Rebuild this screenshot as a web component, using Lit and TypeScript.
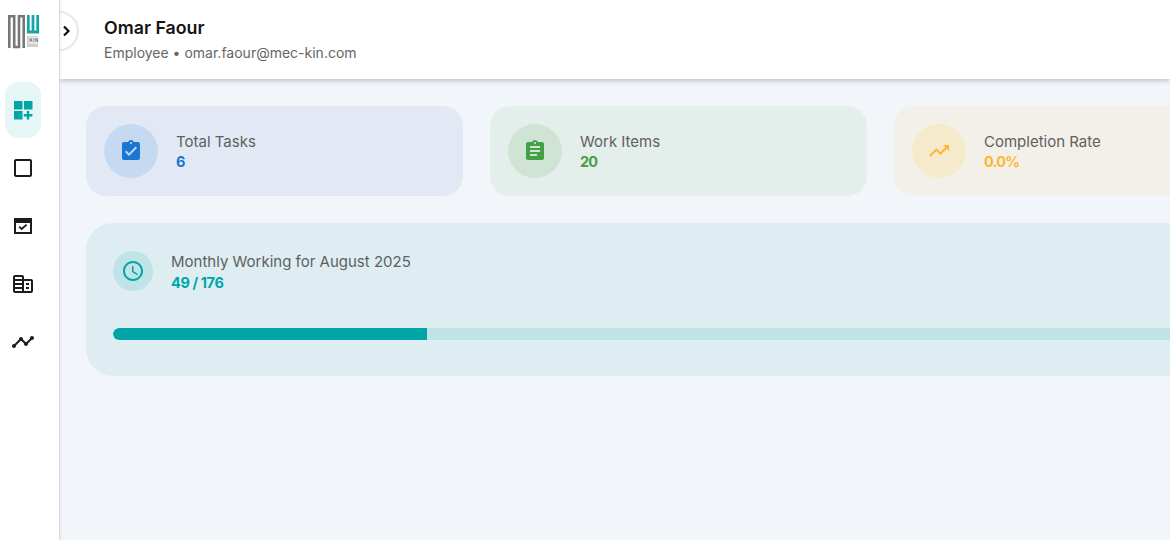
import { LitElement, html, css, svg } from "lit";
import { customElement } from "lit/decorators.js";

const P = {
  dash: "M3 3h8.500v8.500H3zm10 0h8.500v8.500H13zM3 13h8.500v8.500H3zm15.200 0h-2.400v3.100h-3v2.400h3v3h2.400v-3h3.200v-2.400h-3.200z",
  square: "M19 3H5c-1.100 0-2 .9-2 2v14c0 1.100.9 2 2 2h14c1.100 0 2-.9 2-2V5c0-1.100-.9-2-2-2zm0 16H5V5h14v14z",
  cal: "M3 4h18v16H3zM5 9v9h14V9zM7.500 13.300 8.800 12 10.700 13.800 15 10l1.200 1.300-5.500 5z",
  bldg: "M11 3H4C2.900 3 2 3.900 2 5v14c0 1.100.9 2 2 2h16c1.100 0 2-.9 2-2V9c0-1.100-.9-2-2-2h-7V5c0-1.100-.9-2-2-2zM4 5h7v2H4V5zm0 4h7v2H4V9zm0 4h7v2H4v-2zm0 4h7v2H4v-2zm9-8h7v10h-7V9zm2 2v2h3v-2h-3zm0 4v2h3v-2h-3z",
  timeline: "M23 8c0 1.100-.9 2-2 2-.18 0-.35-.02-.51-.07l-3.560 3.550c.05.16.07.34.07.52 0 1.100-.9 2-2 2s-2-.9-2-2c0-.18.02-.36.07-.52l-2.550-2.550c-.16.05-.34.07-.52.07s-.36-.02-.52-.07l-4.550 4.560c.05.16.07.33.07.51 0 1.100-.9 2-2 2s-2-.9-2-2 .9-2 2-2c.18 0 .35.02.51.07l4.560-4.550C8.020 9.360 8 9.180 8 9c0-1.100.9-2 2-2s2 .9 2 2c0 .18-.02.36-.07.52l2.550 2.550c.16-.05.34-.07.52-.07s.36.02.52.07l3.550-3.560C19.020 8.350 19 8.180 19 8c0-1.100.9-2 2-2s2 .9 2 2z",
  turnedIn: "M19 3h-4.180C14.400 1.840 13.300 1 12 1c-1.300 0-2.400.84-2.820 2H5c-1.100 0-2 .9-2 2v14c0 1.100.9 2 2 2h14c1.100 0 2-.9 2-2V5c0-1.100-.9-2-2-2zm-7 0c.55 0 1 .45 1 1s-.45 1-1 1-1-.45-1-1 .45-1 1-1zm-2 14l-4-4 1.410-1.410L10 14.170l6.590-6.590L18 9l-8 8z",
  assign: "M19 3h-4.180C14.400 1.840 13.300 1 12 1c-1.300 0-2.400.84-2.820 2H5c-1.100 0-2 .9-2 2v14c0 1.100.9 2 2 2h14c1.100 0 2-.9 2-2V5c0-1.100-.9-2-2-2zm-7 0c.55 0 1 .45 1 1s-.45 1-1 1-1-.45-1-1 .45-1 1-1zm2 14H7v-2h7v2zm3-4H7v-2h10v2zm0-4H7V7h10v2z",
  trend: "M16 6l2.290 2.290-4.880 4.880-4-4L2 16.590 3.410 18l6-6 4 4 6.300-6.290L22 12V6z",
  clock: "M11.990 2C6.470 2 2 6.480 2 12s4.470 10 9.990 10C17.520 22 22 17.520 22 12S17.520 2 11.990 2zM12 20c-4.420 0-8-3.580-8-8s3.580-8 8-8 8 3.580 8 8-3.580 8-8 8zm.5-13H11v6l5.250 3.150.75-1.230-4.500-2.670z",
};

const icon = (d: string) => html`<svg class="ic" viewBox="0 0 24 24"><path d=${d} fill-rule="evenodd"></path></svg>`;

@customElement("app-root")
export class AppRoot extends LitElement {
  static styles = css`
    :host { display: block; width: 1170px; height: 540px; overflow: hidden; font-family: Inter, "Liberation Sans", sans-serif; background: #f2f5fa; }
    .root { display: flex; height: 540px; position: relative; }
    .side { flex: 0 0 54px; padding-left: 5px; background: #fff; border-right: 1px solid #d8dbe6; box-shadow: 1px 0 2px rgba(0,0,0,.06); display: flex; flex-direction: column; align-items: flex-start; position: relative; z-index: 3; box-sizing: content-box; }
    .logo { width: 32px; height: 34px; margin: 15px 0 33px 3px; display: block; }
    .nav { width: 36px; height: 56px; border-radius: 14px; display: flex; align-items: center; justify-content: center; margin-bottom: 2px; color: #1c1c1c; }
    .nav.active { background: #e6f6f6; color: #00a6a6; }
    .ic { width: 24px; height: 24px; fill: currentColor; display: block; }
    .toggle { position: absolute; left: 39px; top: 11px; width: 36px; height: 36px; border-radius: 50%; background: #fff; border: 2px solid #e8e8e8; display: flex; align-items: center; justify-content: flex-end; z-index: 2; box-sizing: content-box; }
    .toggle svg { width: 14px; height: 14px; margin-right: 3px; fill: none; stroke: #111; stroke-width: 2.2; }
    .main { flex: 1; min-width: 0; display: flex; flex-direction: column; }
    .head { height: 79px; flex: none; background: #fff; box-shadow: 0 2px 5px rgba(0,0,0,.2); padding: 17px 0 0 44px; box-sizing: border-box; position: relative; z-index: 1; }
    .name { font-size: 17.8px; line-height: 22px; font-weight: 600; color: #141414; }
    .sub { font-size: 14px; line-height: 20px; color: #666; margin-top: 4px; }
    .content { padding: 27px 26px; width: 1185px; box-sizing: content-box; }
    .cards { display: grid; grid-template-columns: repeat(3, 377px); gap: 27px; }
    .card { height: 90px; border-radius: 20px; display: flex; align-items: center; padding: 0 18px; gap: 18px; box-sizing: border-box; }
    .circle { width: 54px; height: 54px; border-radius: 50%; display: flex; align-items: center; justify-content: center; flex: none; }
    .text { padding-top: 2px; }
    .mrow .text { padding-top: 4px; }
    .label { font-size: 15px; line-height: 20px; color: #5f5f5f; }
    .val { font-size: 14.5px; line-height: 20px; font-weight: 700; letter-spacing: -.8px; }
    .blue { background: #e2e9f4; } .blue .circle { background: #c5daf0; } .blue .circle, .blue .val { color: #1976d2; }
    .green { background: #e4eeea; } .green .circle { background: #cfe4d5; } .green .circle, .green .val { color: #43a047; }
    .amber { background: #f3f0e9; } .amber .circle { background: #f6eacc; } .amber .circle, .amber .val { color: #fdb62f; }
    .month { margin: 27px 2px 0 0; height: 153px; border-radius: 27px; background: #deedf2; padding: 27px; box-sizing: border-box; }
    .mrow { display: flex; align-items: center; gap: 18px; height: 41px; }
    .mcircle { width: 40px; height: 40px; border-radius: 50%; background: #bfe3e6; color: #00a6a6; display: flex; align-items: center; justify-content: center; flex: none; }
    .mval { font-size: 14.5px; line-height: 20px; font-weight: 700; letter-spacing: -.4px; color: #00a6a6; margin-top: 1px; }
    .track { margin-top: 37px; height: 12px; border-radius: 6px; background: #bfe3e6; overflow: hidden; }
    .fill { height: 100%; background: #00a6a6; border-radius: 6px 0 0 6px; }
    .logotext { font: 700 4.500px "Liberation Sans", sans-serif; fill: #666; letter-spacing: .5px; }
  `;

  render() {
    return html`<div class="root">
      <aside class="side">
        <svg class="logo" viewBox="0 0 32 34">
          <path d="M1.300 33V1.300H6.200V32H11V1.300H15.700V33" fill="none" stroke="#777" stroke-width="2.600"></path>
          <path d="M20.300 0V17H29.700V0M25 0V16" fill="none" stroke="#1aa5a5" stroke-width="2.800"></path>
          <rect x="19" y="21" width="11" height="11" fill="#d0d0d0"></rect>
          <rect x="21" y="22" width="9" height="6.500" fill="#f0f0f0"></rect>
          ${svg`<text class="logotext" x="21.600" y="27.300">KIN</text>`}
        </svg>
        <div class="nav active">${icon(P.dash)}</div>
        <div class="nav">${icon(P.square)}</div>
        <div class="nav">${icon(P.cal)}</div>
        <div class="nav">${icon(P.bldg)}</div>
        <div class="nav">${icon(P.timeline)}</div>
      </aside>
      <div class="toggle"><svg viewBox="0 0 14 14"><path d="M4 2.500 8.500 7 4 11.500"></path></svg></div>
      <div class="main">
        <header class="head">
          <div class="name">Omar Faour</div>
          <div class="sub">Employee • omar.faour@mec-kin.com</div>
        </header>
        <section class="content">
          <div class="cards">
            <div class="card blue"><div class="circle">${icon(P.turnedIn)}</div><div class="text"><div class="label">Total Tasks</div><div class="val">6</div></div></div>
            <div class="card green"><div class="circle">${icon(P.assign)}</div><div class="text"><div class="label">Work Items</div><div class="val">20</div></div></div>
            <div class="card amber"><div class="circle">${icon(P.trend)}</div><div class="text"><div class="label">Completion Rate</div><div class="val">0.0%</div></div></div>
          </div>
          <div class="month">
            <div class="mrow"><div class="mcircle">${icon(P.clock)}</div><div class="text"><div class="label">Monthly Working for August 2025</div><div class="mval">49 / 176</div></div></div>
            <div class="track"><div class="fill" style="width:${(49 / 176) * 100}%"></div></div>
          </div>
        </section>
      </div>
    </div>`;
  }
}
